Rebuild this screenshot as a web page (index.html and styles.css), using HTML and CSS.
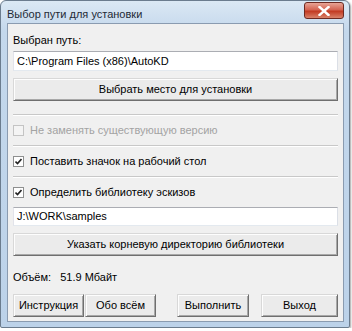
FILE: index.html
```html
<!DOCTYPE html>
<html lang="ru">
<head>
  <meta charset="UTF-8" />
  <meta name="viewport" content="width=device-width, initial-scale=1" />
  <title>Выбор пути для установки</title>
  <link rel="stylesheet" href="styles.css">
</head>
<body>

<div class="window">
  <div class="titlebar">
    <span class="title">Выбор пути для установки</span>
    <span class="close">
      <svg width="12" height="10" viewBox="0 0 12 10"><path d="M1.5 1 L10.5 9 M10.5 1 L1.5 9" stroke="#fff" stroke-width="2.4" stroke-linecap="square"/></svg>
    </span>
  </div>

  <div class="client">
    <div class="label">Выбран путь:</div>
    <div class="field">C:\Program Files (x86)\AutoKD</div>
    <div class="btn wide">Выбрать место для установки</div>

    <div class="options">
      <div class="option disabled"><span class="box"></span>Не заменять существующую версию</div>
      <div class="option"><span class="box"><svg width="7" height="7" viewBox="0 0 7 7"><path d="M0.5 3.5 L2.5 5.5 L6.5 1" stroke="#222" stroke-width="1.6" fill="none"/></svg></span>Поставить значок на рабочий стол</div>
      <div class="option"><span class="box"><svg width="7" height="7" viewBox="0 0 7 7"><path d="M0.5 3.5 L2.5 5.5 L6.5 1" stroke="#222" stroke-width="1.6" fill="none"/></svg></span>Определить библиотеку эскизов</div>
    </div>

    <div class="field second">J:\WORK\samples</div>
    <div class="btn wide">Указать корневую директорию библиотеки</div>

    <div class="size">Объём: <span class="value">51.9 Мбайт</span></div>

    <div class="actions">
      <div class="group">
        <div class="btn">Инструкция</div>
        <div class="btn">Обо всём</div>
      </div>
      <div class="group spaced">
        <div class="btn">Выполнить</div>
        <div class="btn">Выход</div>
      </div>
    </div>
  </div>
</div>

</body>
</html>
```

FILE: styles.css
```css
body { margin: 0; background: #fff; font-family: "Liberation Sans", Arial, sans-serif; font-size: 11px; color: #000; }

.window {
  width: 350px; height: 328px; box-sizing: border-box;
  border: 1px solid #6b7c8e; border-radius: 6px 6px 2px 2px;
  background: linear-gradient(#dbe8f4, #c4d8ec 30px, #bcd2e9);
  padding: 0 5px 5px 6px;
  display: flex; flex-direction: column;
  box-shadow: 1px 1px 2px rgba(0,0,0,0.35);
}

.titlebar { height: 22px; display: flex; align-items: flex-start; justify-content: space-between; }
.title { margin-top: 7px; font-size: 11px; color: #1e2a36; }
.close {
  width: 38px; height: 15px; margin-right: 0; margin-top: 1px;
  border: 1px solid #6d2a22; border-radius: 3px;
  background: linear-gradient(#e8a495, #d46452 45%, #c23a22 55%, #d9826a);
  display: flex; align-items: center; justify-content: center;
}

.client {
  flex: 1; border: 1px solid #8a9bb0; background: #f0f0f0;
  padding: 9px 5px 0 5px; display: flex; flex-direction: column;
}

.label { line-height: 14px; }

.field {
  height: 20px; margin-top: 4px; box-sizing: border-box;
  border: 1px solid; border-color: #abadb3 #dbdfe6 #e3e9ef #e2e3ea;
  background: #fff; padding: 0 3px; line-height: 18px;
}
.field.second { margin-top: 0; height: 19px; line-height: 17px; }

.btn {
  height: 23px; box-sizing: border-box; text-align: center; line-height: 21px;
  border: 1px solid; border-color: #d8d8d8 #6f6f6f #6f6f6f #d8d8d8;
  background: #ebebeb;
  box-shadow: inset 1px 1px #fdfdfd, inset -1px -1px #a8a8a8;
}
.btn.wide { margin-top: 7px; }

.options { margin-top: 13px; }
.option {
  height: 31px; box-sizing: border-box; display: flex; align-items: center;
  border-top: 1px solid #c8c8c8; box-shadow: inset 0 1px #fff;
}
.option:last-child { height: 31px; }
.option.disabled { color: #a3a3a3; }
.box {
  width: 9px; height: 9px; margin-right: 6px; border: 1px solid #8e8f8f;
  background: #fff; display: flex; align-items: center; justify-content: center;
}
.option.disabled .box { border-color: #c4c4c4; background: #f4f4f4; }

.size { margin-top: 14px; line-height: 14px; }
.size .value { margin-left: 6px; }

.actions { margin-top: 10px; display: flex; justify-content: space-between; }
.group { display: flex; gap: 1px; }
.group .btn { width: 71px; }
.group.spaced { gap: 12px; }
.group.spaced .btn { width: 72px; }
.group.spaced .btn:last-child { width: 77px; }
```
